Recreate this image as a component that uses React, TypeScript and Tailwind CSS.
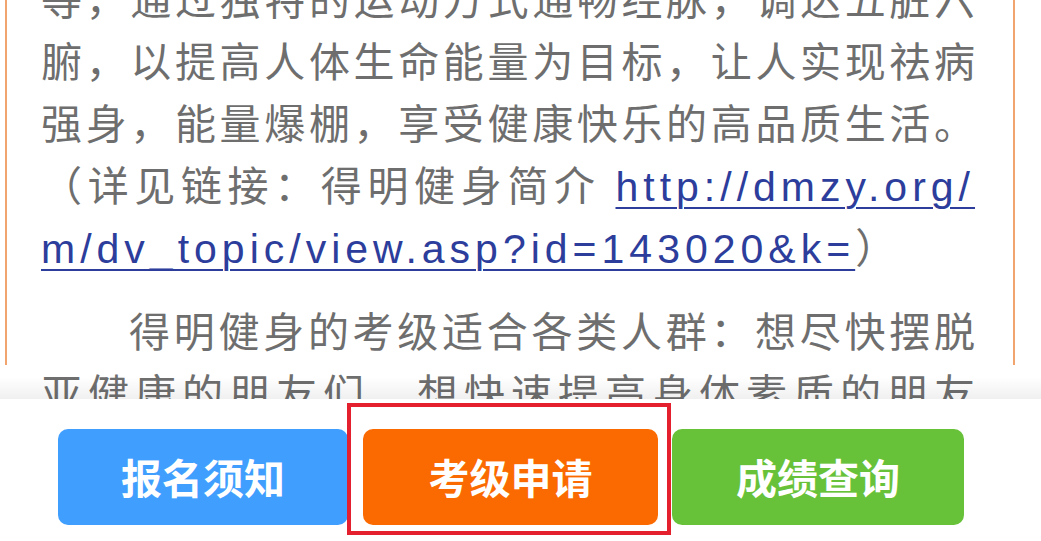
const lines = [
  "等，通过独特的运动方式通畅经脉，调达五脏六",
  "腑，以提高人体生命能量为目标，让人实现祛病",
  "强身，能量爆棚，享受健康快乐的高品质生活。",
];

function Link({ children }: { children: string }) {
  return (
    <a
      href="#"
      className="font-['Liberation_Sans','Noto_Sans_CJK_SC',sans-serif] leading-none tracking-[5px] text-[#2c3d9c] underline decoration-2 underline-offset-[6px]"
    >
      {children}
    </a>
  );
}

export default function App() {
  return (
    <div className="w-[1041px] h-[541px] bg-white flex flex-col overflow-hidden font-['Noto_Sans_CJK_SC',sans-serif]">
      {/* article */}
      <div className="relative h-[399px] shrink-0 overflow-hidden">
        <div className="ml-[5px] mr-[26px] h-full border-x-2 border-[#f2a46e] pl-[34px]">
          <div className="-mt-[34px] w-[934px] text-[41px] leading-[62px] text-[#6e6e6e]">
            {lines.map((l) => (
              <div key={l} className="h-[62px] whitespace-nowrap text-justify [text-align-last:justify]">
                {l}
              </div>
            ))}
            <div className="h-[62px] whitespace-nowrap text-justify [text-align-last:justify]">
              （详见链接：得明健身简介 <Link>http://dmzy.org/</Link>
            </div>
            <div className="h-[62px] whitespace-nowrap">
              <Link>m/dv_topic/view.asp?id=143020&amp;k=</Link>）
            </div>
            <div className="mt-[22px]">
              <div className="h-[62px] whitespace-nowrap indent-[88px] text-justify [text-align-last:justify]">
                得明健身的考级适合各类人群：想尽快摆脱
              </div>
              <div className="h-[62px] whitespace-nowrap text-justify [text-align-last:justify]">
                亚健康的朋友们，想快速提高身体素质的朋友
              </div>
            </div>
          </div>
        </div>
        <div className="pointer-events-none absolute inset-x-0 bottom-0 h-[22px] bg-gradient-to-b from-black/0 to-black/[0.06]" />
      </div>

      {/* footer actions */}
      <div className="relative flex-1 pt-[30px] pl-[58px]">
        <div className="flex items-start">
          <button className="w-[290px] h-[96px] rounded-[10px] bg-[#409eff] text-white text-[41px] font-bold">
            报名须知
          </button>
          <button className="ml-[15px] w-[295px] h-[96px] rounded-[10px] bg-[#fb6a00] text-white text-[41px] font-bold">
            考级申请
          </button>
          <button className="ml-[14px] w-[292px] h-[96px] rounded-[10px] bg-[#67c23a] text-white text-[41px] font-bold">
            成绩查询
          </button>
        </div>
        <div className="pointer-events-none absolute left-[347px] top-[4px] w-[324px] h-[132px] border-4 border-[#e5202e]" />
      </div>
    </div>
  );
}
